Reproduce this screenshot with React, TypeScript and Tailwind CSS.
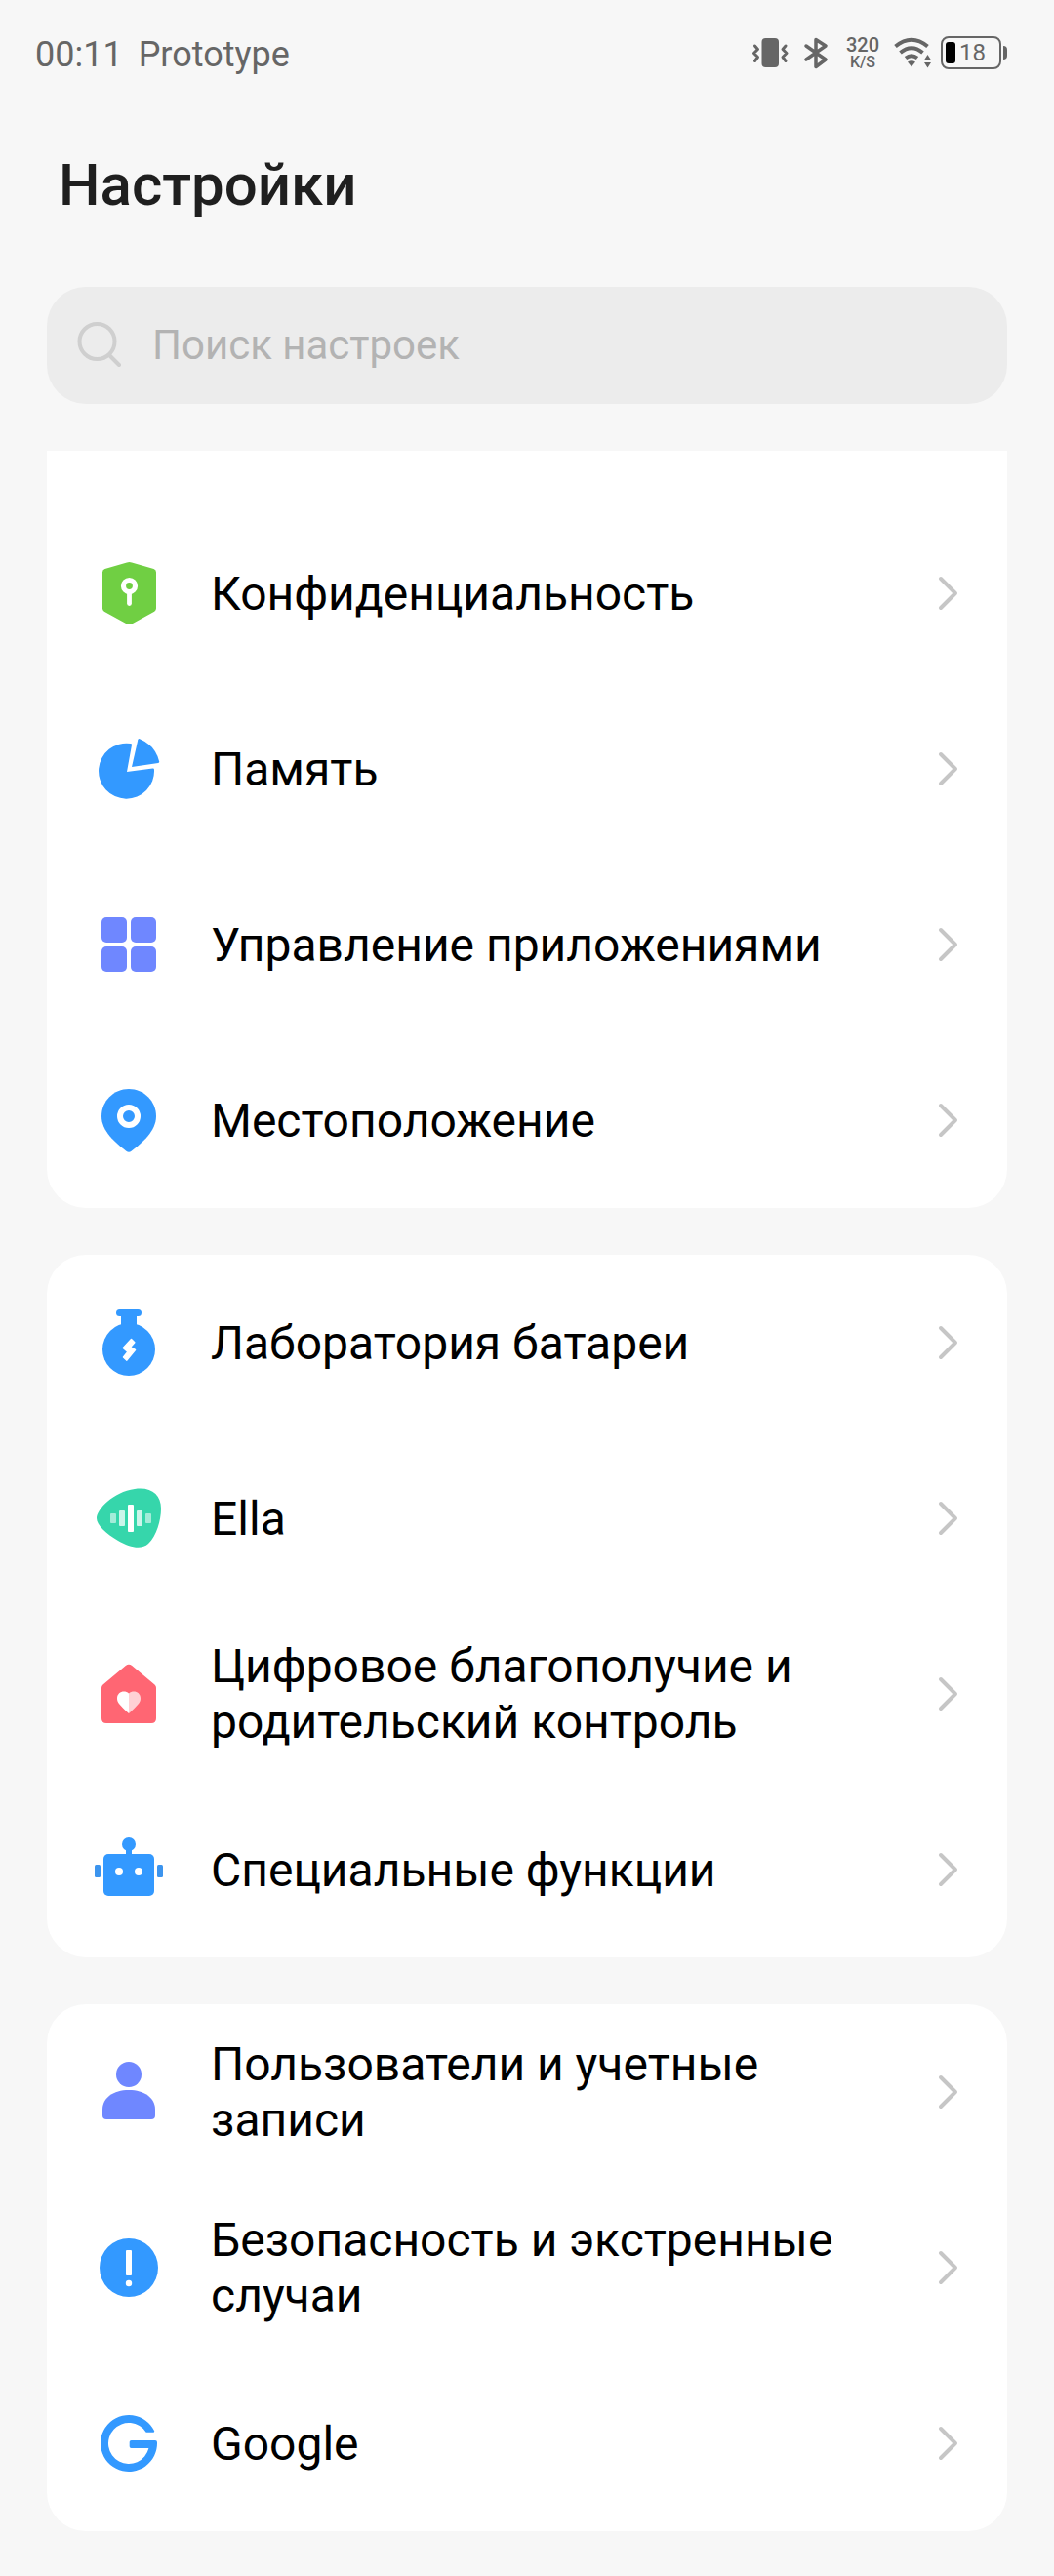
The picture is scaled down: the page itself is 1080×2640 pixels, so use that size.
import type { ReactNode } from "react";
import clsx from "clsx";

type Item = {
  title: string;
  icon: ReactNode;
};

const Icon = ({ color, children }: { color: string; children: ReactNode }) => (
  <svg viewBox="0 0 72 72" className={clsx("size-18 shrink-0", color)} fill="currentColor" aria-hidden="true">
    {children}
  </svg>
);

const PrivacyIcon = () => (
  <Icon color="text-[#70cf43]">
    <path d="M34 4.400q2.500-1 5 0L61.500 11q2.500.9 2.500 3.600v37q0 2-1.800 3.200L39 67.500q-2.500 1.200-5 0L10.800 54.800Q9 53.600 9 51.600v-37Q9 11.900 11.500 11z" />
    <circle cx="36.500" cy="28.500" r="6" fill="none" stroke="#fff" strokeWidth="5.200" />
    <path d="M36.500 36v10.600" stroke="#fff" strokeWidth="4.800" strokeLinecap="round" />
  </Icon>
);

const StorageIcon = () => (
  <Icon color="text-[#3399ff]">
    <path d="M37.8 10Q39.3 10.2 39 11.6L34 39l26.500-3.600q1.500-.1 1.500 1.400A28.500 28.500 0 1 1 37.800 10z" />
    <path d="M45.300 6.200q.4-1.500 1.800-1A34 34 0 0 1 67.200 28.500q.2 1.300-1.100 1.500L39 34z" />
  </Icon>
);

const AppsIcon = () => (
  <Icon color="text-[#6f87ff]">
    <rect x="8" y="8" width="26" height="26" rx="5" />
    <rect x="38" y="8" width="26" height="26" rx="5" />
    <rect x="8" y="38" width="26" height="26" rx="5" />
    <rect x="38" y="38" width="26" height="26" rx="5" />
  </Icon>
);

const LocationIcon = () => (
  <Icon color="text-[#3399ff]">
    <path d="M36 4C20.500 4 8 16.500 8 32c0 15 14 27 25.400 35.700q2.600 1.900 5.200 0C50 59 64 47 64 32 64 16.500 51.500 4 36 4z" />
    <circle cx="36" cy="32" r="9" fill="none" stroke="#fff" strokeWidth="6" />
  </Icon>
);

const BatteryLabIcon = () => (
  <Icon color="text-[#3399ff]">
    <rect x="23" y="2" width="26" height="7" rx="3.500" />
    <rect x="28" y="6" width="16" height="16" />
    <circle cx="36" cy="43" r="27" />
    <path
      d="M38.500 32.600l3.300 3.200-4.200 4.800 4.900 2.900-8.600 10.600-3.400-3.100 4.400-5.600-4.700-4z"
      fill="#fff"
      stroke="#fff"
      strokeWidth="1.500"
      strokeLinejoin="round"
    />
  </Icon>
);

const EllaIcon = () => (
  <Icon color="text-[#36d6ab]">
    <path d="M3 36C3 27 20 9 42 6c17-2.500 27 6 27 20 0 12-4.500 28-13 36-7 6.500-19 4-31-3C13 52 3 43 3 36z" />
    <g fill="#fff">
      <rect x="17" y="31" width="6" height="10" rx="1" opacity=".55" />
      <rect x="26" y="28" width="6" height="16" rx="1" opacity=".75" />
      <rect x="35" y="22" width="6" height="28" rx="1" />
      <rect x="44" y="28" width="6" height="16" rx="1" opacity=".75" />
      <rect x="53" y="31" width="6" height="10" rx="1" opacity=".55" />
    </g>
  </Icon>
);

const WellbeingIcon = () => (
  <Icon color="text-[#ff6673]">
    <path d="M32.800 7q3.200-2.700 6.400 0L62.500 26.500Q64 27.800 64 29.800V61q0 5-5 5H13q-5 0-5-5V29.800q0-2 1.500-3.300z" />
    <path d="M36 35.500c-4.500-4-12-1.600-12 5.200 0 4.300 3 6.800 12 15.300z" fill="#fff" />
    <path d="M36 35.500c4.500-4 12-1.600 12 5.200 0 4.300-3 6.800-12 15.300z" fill="#fff" opacity=".7" />
  </Icon>
);

const RobotIcon = () => (
  <Icon color="text-[#3399ff]">
    <circle cx="36" cy="10" r="7" />
    <rect x="33" y="14" width="6" height="8" />
    <rect x="10" y="20" width="52" height="43" rx="5" />
    <rect x="1" y="31" width="6" height="13" rx="1.500" fill="#3c94ee" />
    <rect x="65" y="31" width="6" height="13" rx="1.500" fill="#3c94ee" />
    <circle cx="26" cy="38" r="4" fill="#fff" />
    <circle cx="46" cy="38" r="4" fill="#fff" />
  </Icon>
);

const UsersIcon = () => (
  <Icon color="text-[#6f87ff]">
    <circle cx="36" cy="18" r="13" />
    <path d="M9 54C9 42 20 34 36 34s27 8 27 20v6q0 4-4 4H13q-4 0-4-4z" />
  </Icon>
);

const EmergencyIcon = () => (
  <Icon color="text-[#3399ff]">
    <circle cx="36" cy="36" r="30" />
    <rect x="33" y="18" width="6" height="26" rx="1" fill="#fff" />
    <circle cx="36" cy="52" r="3.200" fill="#fff" />
  </Icon>
);

const GoogleIcon = () => (
  <Icon color="text-[#3399ff]">
    <path d="M61 24.700q1.700 0 1-1.600A29 29 0 1 0 65 35q0-2-2-2H38.500q-1.800 0-1.800 1.800v4.400q0 1.800 1.800 1.800h17.900A21 21 0 1 1 53.700 24.700z" />
  </Icon>
);

const sections: Item[][] = [
  [
    { title: "Конфиденциальность", icon: <PrivacyIcon /> },
    { title: "Память", icon: <StorageIcon /> },
    { title: "Управление приложениями", icon: <AppsIcon /> },
    { title: "Местоположение", icon: <LocationIcon /> },
  ],
  [
    { title: "Лаборатория батареи", icon: <BatteryLabIcon /> },
    { title: "Ella", icon: <EllaIcon /> },
    { title: "Цифровое благополучие и родительский контроль", icon: <WellbeingIcon /> },
    { title: "Специальные функции", icon: <RobotIcon /> },
  ],
  [
    { title: "Пользователи и учетные записи", icon: <UsersIcon /> },
    { title: "Безопасность и экстренные случаи", icon: <EmergencyIcon /> },
    { title: "Google", icon: <GoogleIcon /> },
  ],
];

const StatusBar = () => (
  <div className="flex items-start justify-between pl-9 pr-12 text-[#666666]">
    <div className="flex gap-4 text-[36px] leading-10">
      <span>00:11</span>
      <span>Prototype</span>
    </div>
    <div className="flex h-9 items-center gap-2">
      <svg viewBox="0 0 44 36" className="h-9 w-11" fill="none" stroke="currentColor" strokeWidth="3" aria-hidden="true">
        <rect x="12.500" y="3" width="17.500" height="30" rx="4" fill="currentColor" stroke="none" />
        <path d="M5.500 11l3 3.500-4 4 4 4-3 4M37 11l-3 3.500 4 4-4 4 3 4" strokeLinecap="round" strokeLinejoin="round" />
      </svg>
      <svg viewBox="0 0 32 36" className="h-9 w-8" fill="none" stroke="currentColor" strokeWidth="3.500" aria-hidden="true">
        <path d="M6 11l20 14-10 7.500V4.500L26 11 6 25" strokeLinecap="round" strokeLinejoin="round" />
      </svg>
      <div className="flex w-12 flex-col items-center font-medium">
        <span className="text-[20px] leading-5">320</span>
        <span className="text-[16px] leading-4">K/S</span>
      </div>
      <svg viewBox="0 0 40 36" className="h-9 w-10" fill="none" stroke="currentColor" strokeWidth="4" aria-hidden="true">
        <path d="M1.500 11.500Q18 -2 34.500 11.500M6.500 18Q18 8.500 29.500 18M12 23.500Q18 19 24 23.500" />
        <path d="M14 27.500q4-2.500 8 0l-4 5z" fill="currentColor" stroke="none" />
        <path d="M34.500 20l3.500 5.500h-7zM34.500 33.500L31 28h7z" fill="currentColor" stroke="none" />
      </svg>
      <div className="flex items-center gap-0.5">
        <div className="flex h-[34px] w-[62px] items-center gap-1 rounded-lg border-2 border-[#666666] pl-[3px] text-[24px] leading-6">
          <span className="h-[22px] w-[10px] rounded-[3px] bg-black" />
          <span>18</span>
        </div>
        <span className="h-3.5 w-1 rounded-r-sm bg-[#666666]" />
      </div>
    </div>
  </div>
);

const SearchBox = () => (
  <label className="flex h-30 items-center gap-8 rounded-[40px] bg-[#ececec] pl-7">
    <svg viewBox="0 0 48 48" className="size-12 shrink-0 text-[#cfcfcf]" fill="none" stroke="currentColor" strokeWidth="4" aria-hidden="true">
      <circle cx="23.500" cy="20" r="18" />
      <path d="M36 34l10 10" strokeLinecap="round" />
    </svg>
    <input
      type="search"
      aria-label="Поиск настроек"
      placeholder="Поиск настроек"
      className="min-w-0 flex-1 bg-transparent text-[42px] leading-12 outline-none placeholder:text-[#b3b3b3]"
    />
  </label>
);

const SettingsRow = ({ title, icon }: Item) => (
  <li>
    <a href="#" className="flex min-h-45 items-center px-12">
      {icon}
      <span className="ml-12 flex-1 text-[48px] leading-[57px] text-black">{title}</span>
      <svg
        viewBox="0 0 24 40"
        className="ml-12 h-10 w-6 shrink-0 text-[#c6c6c6]"
        fill="none"
        stroke="currentColor"
        strokeWidth="4"
        strokeLinecap="round"
        strokeLinejoin="round"
        aria-hidden="true"
      >
        <path d="M4 5l15 15L4 35" />
      </svg>
    </a>
  </li>
);

const App = () => {
  return (
    <div className="min-h-screen bg-[#f7f7f7] pb-11 pt-9 font-['Roboto',sans-serif]">
      <StatusBar />
      <h1 className="mt-[78px] px-15 text-[60px] font-medium leading-[72px] text-[#1f1f1f]">Настройки</h1>
      <main className="mt-17 flex flex-col gap-12 px-12">
        <SearchBox />
        {sections.map((items, index) => (
          <ul
            key={items[0].title}
            className={clsx("bg-white", index === 0 ? "rounded-b-[40px] pt-14" : "rounded-[40px]")}
          >
            {items.map((item) => (
              <SettingsRow key={item.title} {...item} />
            ))}
          </ul>
        ))}
      </main>
    </div>
  );
};

export default App;
